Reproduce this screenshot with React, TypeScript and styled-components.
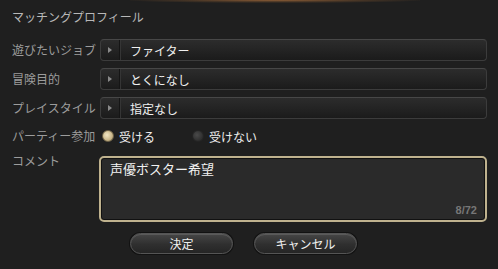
import styled, { createGlobalStyle } from "styled-components";

const GlobalStyle = createGlobalStyle`
  html, body {
    margin: 0;
    padding: 0;
    background: #1e1e1e;
  }
  body {
    font-family: "Noto Sans CJK JP", "Noto Sans", sans-serif;
  }
`;

const Panel = styled.div`
  position: relative;
  width: 498px;
  height: 269px;
  box-sizing: border-box;
  padding: 8px 11px 0 12px;
  background: #1f1f1f;
  overflow: hidden;
`;

const TopGlow = styled.div`
  position: absolute;
  top: 0;
  left: 130px;
  width: 290px;
  height: 3px;
  background: radial-gradient(
    ellipse at center top,
    rgba(170, 110, 60, 0.8) 0%,
    rgba(120, 80, 45, 0.4) 45%,
    rgba(31, 31, 31, 0) 75%
  );
`;

const Title = styled.div`
  color: #b8b8b8;
  font-size: 12px;
  line-height: 18px;
  margin-bottom: 13px;
`;

const Form = styled.div`
  display: grid;
  grid-template-columns: 88px 1fr;
  row-gap: 7px;
  align-items: center;
`;

const Label = styled.div<{ $top?: boolean }>`
  color: #9c9c9c;
  font-size: 12px;
  line-height: 16px;
  align-self: ${(p) => (p.$top ? "start" : "center")};
`;

const Select = styled.div`
  display: flex;
  align-items: stretch;
  height: 22px;
  box-sizing: border-box;
  border: 1px solid #3c3c3c;
  border-top-color: #474747;
  border-radius: 4px;
  background: linear-gradient(#2c2c2c, #222 60%, #1b1b1b);
`;

const ArrowBox = styled.div`
  width: 18px;
  display: flex;
  align-items: center;
  justify-content: center;
  border-right: 1px solid #151515;
  box-shadow: 1px 0 0 #353535;
`;

const Triangle = styled.div`
  width: 0;
  height: 0;
  border-top: 3px solid transparent;
  border-bottom: 3px solid transparent;
  border-left: 4px solid #8a8a8a;
`;

const SelectText = styled.div`
  display: flex;
  align-items: center;
  padding-left: 10px;
  color: #f0f0f0;
  font-size: 12px;
`;

const RadioRow = styled.div`
  display: flex;
  align-items: center;
  height: 20px;
  padding-left: 2px;
`;

const RadioItem = styled.label`
  display: flex;
  align-items: center;
  gap: 5px;
  width: 90px;
  color: #eee;
  font-size: 12px;
`;

const Dot = styled.span<{ $on: boolean }>`
  width: 12px;
  height: 12px;
  border-radius: 50%;
  box-sizing: border-box;
  background: ${(p) =>
    p.$on
      ? "radial-gradient(circle at 40% 40%, #f2e6c4, #c9b689 60%, #8d7b55)"
      : "radial-gradient(circle at 40% 40%, #4a4a4a, #2e2e2e 70%)"};
  border: 1px solid ${(p) => (p.$on ? "#6e6247" : "#242424")};
`;

const CommentBox = styled.div`
  position: relative;
  height: 66px;
  box-sizing: border-box;
  margin-left: -1px;
  margin-top: 3px;
  border: 2px solid #bfb28e;
  border-radius: 5px;
  background: #2a2a2a;
  box-shadow: inset 0 0 0 1px #111;
  padding: 2px 9px;
  color: #f2f2f2;
  font-size: 13px;
  line-height: 18px;
`;

const Counter = styled.span`
  position: absolute;
  right: 8px;
  bottom: 1px;
  color: #777;
  font-size: 11px;
  font-weight: bold;
  font-family: "Liberation Sans", sans-serif;
`;

const Buttons = styled.div`
  display: flex;
  gap: 21px;
  padding-left: 118px;
  margin-top: 11px;
`;

const Button = styled.button`
  width: 103px;
  height: 21px;
  box-sizing: border-box;
  border: 1px solid #555;
  border-radius: 11px;
  background: linear-gradient(#464646, #2f2f2f 55%, #252525);
  box-shadow: 0 0 0 1px #121212, inset 0 1px 0 #5a5a5a;
  color: #f0f0f0;
  font-family: "Noto Sans CJK JP", sans-serif;
  font-size: 12px;
  padding: 0;
`;

export default function App() {
  return (
    <>
      <GlobalStyle />
      <Panel>
        <TopGlow />
        <Title>マッチングプロフィール</Title>
        <Form>
          <Label>遊びたいジョブ</Label>
          <Select>
            <ArrowBox>
              <Triangle />
            </ArrowBox>
            <SelectText>ファイター</SelectText>
          </Select>
          <Label>冒険目的</Label>
          <Select>
            <ArrowBox>
              <Triangle />
            </ArrowBox>
            <SelectText>とくになし</SelectText>
          </Select>
          <Label>プレイスタイル</Label>
          <Select>
            <ArrowBox>
              <Triangle />
            </ArrowBox>
            <SelectText>指定なし</SelectText>
          </Select>
          <Label>パーティー参加</Label>
          <RadioRow>
            <RadioItem>
              <Dot $on />
              受ける
            </RadioItem>
            <RadioItem>
              <Dot $on={false} />
              受けない
            </RadioItem>
          </RadioRow>
          <Label $top>コメント</Label>
          <CommentBox>
            声優ボスター希望
            <Counter>8/72</Counter>
          </CommentBox>
        </Form>
        <Buttons>
          <Button>決定</Button>
          <Button>キャンセル</Button>
        </Buttons>
      </Panel>
    </>
  );
}
